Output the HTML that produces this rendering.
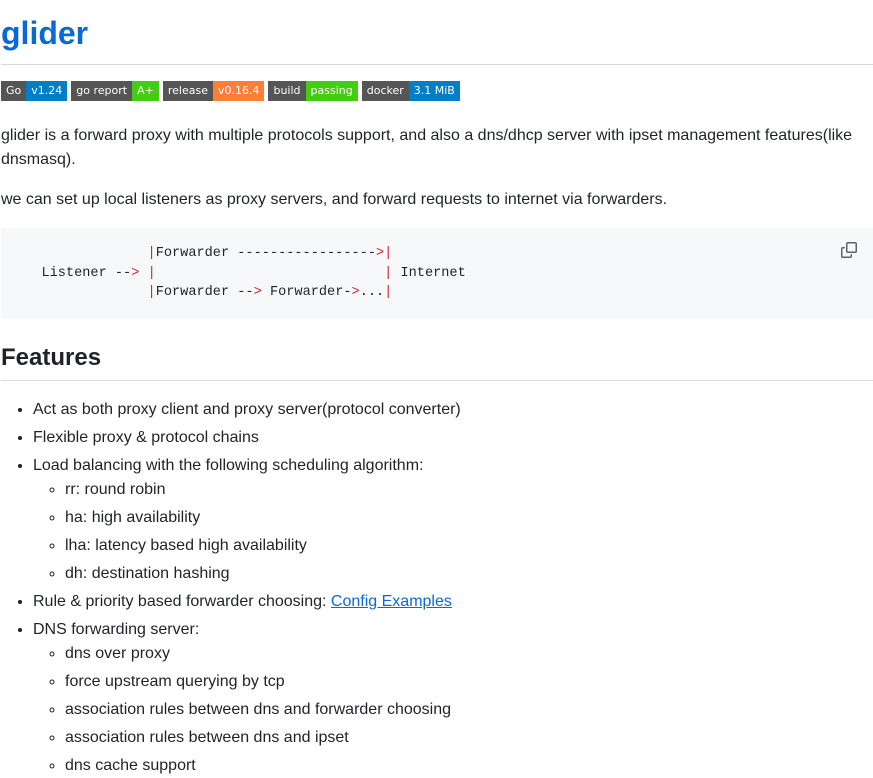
<!DOCTYPE html>
<html><head><meta charset="utf-8"><style>
body{margin:0;padding:0 0 0 1px;width:872px;font-family:"Liberation Sans",sans-serif;font-size:16px;line-height:1.5;color:#1f2328;background:#fff;overflow:hidden}
h1{margin:0;padding:13px 0 11px;font-size:32px;line-height:1.25;color:#0969da;font-weight:600;border-bottom:1px solid #d1d9e0}
.badges{margin-top:16px;height:20px;display:flex;gap:4px}
.b{display:flex;height:20px;font-family:"DejaVu Sans",sans-serif;font-size:11px;line-height:20px;color:#fff}
.b span{padding:0 5px}
.l{background:#555}
p{margin:0 0 16px}
pre{margin:0 0 16px;background:#f6f8fa;padding:16px;font-family:"Liberation Mono",monospace;font-size:13.6px;line-height:19.5px;color:#1f2328;position:relative;height:59px}
.r{color:#cf222e}
h2{margin:24px 0 17px;font-size:24px;line-height:1.25;font-weight:600;padding-bottom:7px;border-bottom:1px solid #d1d9e0}
ul{margin:0;padding-left:32px}
li{margin-top:4px}
ul ul{list-style:circle}
ul ul li:first-child{margin-top:0}
a{color:#0969da}
</style></head><body>
<h1>glider</h1>
<div class="badges">
<div class="b"><span class="l">Go</span><span style="background:#007ec6">v1.24</span></div>
<div class="b"><span class="l">go report</span><span style="background:#4c1">A+</span></div>
<div class="b"><span class="l">release</span><span style="background:#fe7d37">v0.16.4</span></div>
<div class="b"><span class="l">build</span><span style="background:#4c1">passing</span></div>
<div class="b"><span class="l">docker</span><span style="background:#007ec6">3.1 MiB</span></div>
</div>
<p style="margin-top:23px">glider is a forward proxy with multiple protocols support, and also a dns/dhcp server with ipset management features(like dnsmasq).</p>
<p>we can set up local listeners as proxy servers, and forward requests to internet via forwarders.</p>
<pre>                <span class="r">|</span>Forwarder -----------------<span class="r">&gt;|</span>
   Listener --<span class="r">&gt;</span> <span class="r">|</span>                            <span class="r">|</span> Internet
                <span class="r">|</span>Forwarder --<span class="r">&gt;</span> Forwarder-<span class="r">&gt;</span>...<span class="r">|</span><svg style="position:absolute;right:16px;top:14px" width="16" height="16" viewBox="0 0 16 16" fill="#59636e"><path d="M0 6.75C0 5.784.784 5 1.750 5h1.5a.75.75 0 0 1 0 1.5h-1.5a.25.25 0 0 0-.25.25v7.5c0 .138.112.25.25.25h7.5a.25.25 0 0 0 .25-.25v-1.5a.75.75 0 0 1 1.5 0v1.5A1.75 1.75 0 0 1 9.25 16h-7.5A1.75 1.75 0 0 1 0 14.25Z"/><path d="M5 1.75C5 .784 5.784 0 6.75 0h7.5C15.216 0 16 .784 16 1.75v7.5A1.75 1.75 0 0 1 14.25 11h-7.5A1.75 1.75 0 0 1 5 9.25Zm1.75-.25a.25.25 0 0 0-.25.25v7.5c0 .138.112.25.25.25h7.5a.25.25 0 0 0 .25-.25v-7.5a.25.25 0 0 0-.25-.25Z"/></svg></pre>
<h2>Features</h2>
<ul>
<li>Act as both proxy client and proxy server(protocol converter)</li>
<li>Flexible proxy &amp; protocol chains</li>
<li>Load balancing with the following scheduling algorithm:
<ul><li>rr: round robin</li><li>ha: high availability</li><li>lha: latency based high availability</li><li>dh: destination hashing</li></ul></li>
<li>Rule &amp; priority based forwarder choosing: <a href="#">Config Examples</a></li>
<li>DNS forwarding server:
<ul><li>dns over proxy</li><li>force upstream querying by tcp</li><li>association rules between dns and forwarder choosing</li><li>association rules between dns and ipset</li><li>dns cache support</li></ul></li>
</ul>
</body></html>
